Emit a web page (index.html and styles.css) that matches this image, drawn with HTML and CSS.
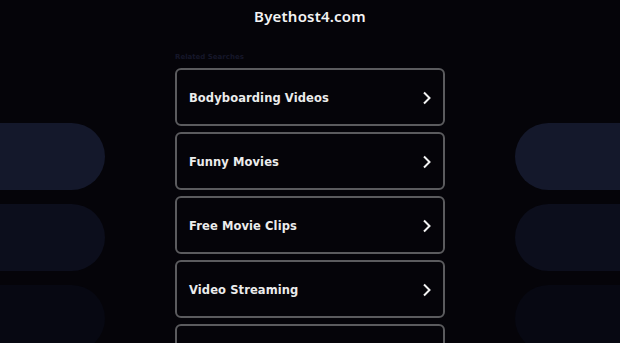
FILE: index.html
```html
<!DOCTYPE html>
<html lang="en">
<head>
    <meta charset="UTF-8">
    <meta name="viewport" content="width=device-width, initial-scale=1.0">
    <title>Byethost4.com</title>
    <link rel="stylesheet" href="styles.css">
</head>
<body>
    <div class="page">
        <div class="deco deco-left">
            <div class="blob b1"></div>
            <div class="blob b2"></div>
            <div class="blob b3"></div>
        </div>
        <div class="main">
            <header class="domain">Byethost4.com</header>
            <div class="related">Related Searches</div>
            <div class="links">
                <a class="link" href="#"><span>Bodyboarding Videos</span><svg class="chev" width="10" height="14" viewBox="0 0 10 14"><path d="M2 1.5 L7.5 7 L2 12.5" fill="none" stroke="#f2f2f2" stroke-width="2"/></svg></a>
                <a class="link" href="#"><span>Funny Movies</span><svg class="chev" width="10" height="14" viewBox="0 0 10 14"><path d="M2 1.5 L7.5 7 L2 12.5" fill="none" stroke="#f2f2f2" stroke-width="2"/></svg></a>
                <a class="link" href="#"><span>Free Movie Clips</span><svg class="chev" width="10" height="14" viewBox="0 0 10 14"><path d="M2 1.5 L7.5 7 L2 12.5" fill="none" stroke="#f2f2f2" stroke-width="2"/></svg></a>
                <a class="link" href="#"><span>Video Streaming</span><svg class="chev" width="10" height="14" viewBox="0 0 10 14"><path d="M2 1.5 L7.5 7 L2 12.5" fill="none" stroke="#f2f2f2" stroke-width="2"/></svg></a>
                <a class="link" href="#"></a>
            </div>
        </div>
        <div class="deco deco-right">
            <div class="blob b1"></div>
            <div class="blob b2"></div>
            <div class="blob b3"></div>
        </div>
    </div>
</body>
</html>
```

FILE: styles.css
```css
html, body {
    margin: 0;
    padding: 0;
    height: 100%;
    overflow: hidden;
}
body {
    background-color: #050409;
    font-family: "DejaVu Sans", Arial, sans-serif;
    color: #eee;
}
.page {
    display: flex;
    justify-content: space-between;
    height: 343px;
}
.deco {
    width: 105px;
    display: flex;
    flex-direction: column;
    gap: 14px;
    padding-top: 123px;
}
.blob {
    height: 67px;
    flex-shrink: 0;
}
.deco-left .blob {
    border-radius: 0 34px 34px 0;
}
.deco-right .blob {
    border-radius: 34px 0 0 34px;
}
.b1 {
    background-color: #14182b;
}
.b2 {
    background-color: #0c0e1c;
}
.b3 {
    background-color: #070812;
}
.main {
    width: 270px;
}
.domain {
    font-family: "Noto Sans", Arial, sans-serif;
    font-weight: 600;
    font-size: 15px;
    letter-spacing: 0.2px;
    color: #f4f4f4;
    text-align: center;
    padding-top: 6px;
    height: 43px;
}
.related {
    font-size: 7px;
    font-weight: bold;
    color: #16172a;
    height: 19px;
    line-height: 16px;
}
.links {
    display: flex;
    flex-direction: column;
    gap: 6px;
}
.link {
    display: flex;
    align-items: center;
    justify-content: space-between;
    height: 52px;
    padding: 2px 11px 0 12px;
    flex-shrink: 0;
    border: 2px solid #5b5b5e;
    border-radius: 6px;
    text-decoration: none;
    color: #ececec;
    font-weight: bold;
    font-size: 11.5px;
    letter-spacing: 0.1px;
}
.chev {
    display: block;
    margin-left: auto;
}
```
